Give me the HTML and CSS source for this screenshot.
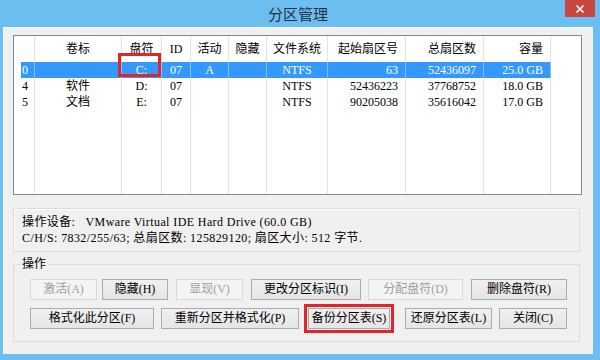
FILE: index.html
```html
<!DOCTYPE html>
<html>
<head>
<meta charset="utf-8">
<title>分区管理</title>
<link rel="stylesheet" href="styles.css">
</head>
<body>

<div class="window">
    <div class="titlebar">
        <span></span>
        <span class="title">分区管理</span>
        <a class="close" href="javascript:;">
            <svg width="10" height="10" viewBox="0 0 10 10"><path d="M1.5 1.5L8.5 8.5M8.5 1.5L1.5 8.5" stroke="#fff" stroke-width="1.6"/></svg>
        </a>
    </div>

    <div class="client">
        <div class="listbox">
            <table class="parts">
                <colgroup>
                    <col><col><col><col><col><col><col><col><col><col><col>
                </colgroup>
                <thead>
                    <tr>
                        <th></th>
                        <th>卷标</th>
                        <th>盘符</th>
                        <th>ID</th>
                        <th>活动</th>
                        <th>隐藏</th>
                        <th>文件系统</th>
                        <th class="num">起始扇区号</th>
                        <th class="num">总扇区数</th>
                        <th class="num">容量</th>
                        <th class="rest"></th>
                    </tr>
                </thead>
                <tbody>
                    <tr class="sel">
                        <td>0</td>
                        <td></td>
                        <td>C:</td>
                        <td>07</td>
                        <td>A</td>
                        <td></td>
                        <td>NTFS</td>
                        <td class="num">63</td>
                        <td class="num">52436097</td>
                        <td class="num">25.0 GB</td>
                        <td class="rest"></td>
                    </tr>
                    <tr>
                        <td>4</td>
                        <td>软件</td>
                        <td>D:</td>
                        <td>07</td>
                        <td></td>
                        <td></td>
                        <td>NTFS</td>
                        <td class="num">52436223</td>
                        <td class="num">37768752</td>
                        <td class="num">18.0 GB</td>
                        <td class="rest"></td>
                    </tr>
                    <tr>
                        <td>5</td>
                        <td>文档</td>
                        <td>E:</td>
                        <td>07</td>
                        <td></td>
                        <td></td>
                        <td>NTFS</td>
                        <td class="num">90205038</td>
                        <td class="num">35616042</td>
                        <td class="num">17.0 GB</td>
                        <td class="rest"></td>
                    </tr>
                    <tr class="filler">
                        <td></td><td></td><td></td><td></td><td></td><td></td><td></td><td></td><td></td><td></td><td class="rest"></td>
                    </tr>
                </tbody>
            </table>
            <span class="mark"></span>
        </div>

        <div class="info">
            <p>操作设备:&nbsp;&nbsp; VMware Virtual IDE Hard Drive (60.0 GB)</p>
            <p>C/H/S: 7832/255/63; 总扇区数: 125829120; 扇区大小: 512 字节.</p>
        </div>

        <fieldset class="ops">
            <legend>操作</legend>
            <div class="row">
                <button class="btn b-act" disabled>激活(A)</button>
                <button class="btn b-hide">隐藏(H)</button>
                <button class="btn b-show" disabled>显现(V)</button>
                <button class="btn b-ident">更改分区标识(I)</button>
                <button class="btn b-assign" disabled>分配盘符(D)</button>
                <button class="btn b-del">删除盘符(R)</button>
            </div>
            <div class="row">
                <button class="btn b-fmt">格式化此分区(F)</button>
                <button class="btn b-refmt">重新分区并格式化(P)</button>
                <button class="btn b-backup">备份分区表(S)</button>
                <button class="btn b-restore">还原分区表(L)</button>
                <button class="btn b-close">关闭(C)</button>
            </div>
        </fieldset>
    </div>
</div>

</body>
</html>
```

FILE: styles.css
```css
body,div,p,table,fieldset,legend{margin:0;padding:0;}
body{width:600px;height:360px;overflow:hidden;background:#6cbdf0;font:12px/16px "Liberation Serif","Noto Sans CJK SC",serif;color:#000;}

.window{height:360px;display:flex;flex-direction:column;padding:0 7px 6px 3px;box-sizing:border-box;}
.titlebar{height:27px;display:grid;grid-template-columns:1fr auto 1fr;align-items:start;}
.title{font:15px/27px "Noto Sans CJK SC",sans-serif;color:#24323f;}
.close{justify-self:end;width:30px;height:17px;margin-right:-2px;background:#c8473f;display:flex;align-items:center;justify-content:center;}
.close svg{display:block;}

.client{flex:1;background:#f0f0f0;padding:8px 0 0 10px;box-shadow:inset 1px 1px 0 #f8f8f8;}

/* 分区列表 */
.listbox{position:relative;width:569px;height:160px;box-sizing:border-box;border:1px solid #828790;background:#fff;padding-left:7px;overflow:hidden;}
.parts{border-collapse:separate;border-spacing:0;table-layout:fixed;width:560px;}
.parts col:nth-child(1){width:14px;}
.parts col:nth-child(2){width:87px;}
.parts col:nth-child(3){width:40px;}
.parts col:nth-child(4){width:29px;}
.parts col:nth-child(5){width:38px;}
.parts col:nth-child(6){width:38px;}
.parts col:nth-child(7){width:61px;}
.parts col:nth-child(8){width:78px;}
.parts col:nth-child(9){width:78px;}
.parts col:nth-child(10){width:67px;}
.parts col:nth-child(11){width:30px;}
.parts th,.parts td{padding:0;border-right:1px solid #e3e3e3;white-space:nowrap;overflow:hidden;text-align:center;font-weight:400;box-sizing:border-box;}
.parts th{height:26px;line-height:26px;}
.parts td{height:16px;line-height:16px;}
.parts th:first-child,.parts td:first-child{text-align:left;padding-left:1px;}
.parts .num{text-align:right;padding-right:7px;}
.parts .rest{border-right:0;}
.parts .sel td{background:#3399ff;color:#fff;border-right-color:#86bff5;}
.parts .sel td.rest{background:none;}
.parts .filler td{height:84px;}
.mark{position:absolute;left:104px;top:17px;width:43px;height:24px;border:3px solid #e0262a;box-sizing:border-box;}

/* 设备信息 */
.info{margin-top:13px;width:567px;box-sizing:border-box;border:1px solid #dcdcdc;box-shadow:inset 1px 1px 0 #fbfbfb;padding:5px 8px;letter-spacing:.4px;}

/* 操作 */
.ops{margin-top:4px;width:567px;box-sizing:border-box;border:1px solid #dcdcdc;padding:0 0 12px 6px;}
.ops legend{padding:0 2px;line-height:16px;}
.row{display:flex;padding-left:10px;margin-top:8px;}
.row:first-of-type{margin-top:7px;}
.btn{height:21px;box-sizing:border-box;border:1px solid #acacac;background:linear-gradient(#f0f0f0,#e5e5e5);font:inherit;line-height:19px;padding:0;color:#000;flex:none;}
.btn:disabled{color:#a0a0a0;border-color:#d9d9d9;background:#f4f4f4;}
.b-act{width:67px;}
.b-hide{width:66px;margin-left:5px;}
.b-show{width:67px;margin-left:8px;}
.b-ident{width:110px;margin-left:8px;}
.b-assign{width:95px;margin-left:7px;}
.b-del{width:96px;margin-left:8px;}
.b-fmt{width:124px;}
.b-refmt{width:138px;margin-left:7px;}
.b-backup{width:82px;margin-left:9px;outline:3px solid #e0262a;outline-offset:1px;}
.b-restore{width:87px;margin-left:15px;}
.b-close{width:68px;margin-left:7px;}
```
